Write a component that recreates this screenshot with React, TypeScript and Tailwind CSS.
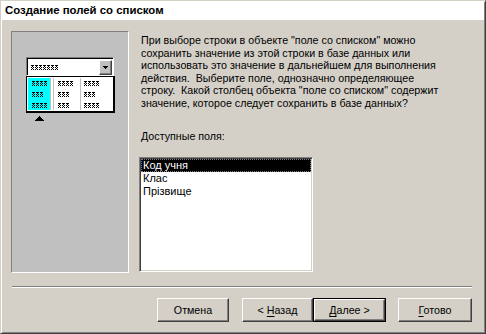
const raised = "border border-t-white border-l-white border-r-[#404040] border-b-[#404040] shadow-[inset_-1px_-1px_0_#808080]";

function Glyph({ n }: { n: number }) {
  const w = n * 4 - 1;
  const px: JSX.Element[] = [];
  for (let c = 0; c < n; c++) {
    for (let y = 0; y < 5; y++) {
      for (let x = 0; x < 3; x++) {
        if ((x + y) % 2 === 0 || y === 0) px.push(<rect key={`${c}-${x}-${y}`} x={c * 4 + x} y={y} width={1} height={1} fill="#000" />);
      }
    }
  }
  return (
    <svg width={w} height={5} viewBox={`0 0 ${w} 5`} className="block" shapeRendering="crispEdges">
      {px}
    </svg>
  );
}

function Column({ rows, className }: { rows: number[]; className: string }) {
  return (
    <div className={`flex flex-col gap-[6px] pt-[3px] ${className}`}>
      {rows.map((n, i) => (
        <Glyph key={i} n={n} />
      ))}
    </div>
  );
}

function ComboPicture() {
  return (
    <div className="w-[118px] h-[242px] bg-[#c0c0c0] border border-t-[#808080] border-l-[#808080] border-r-white border-b-white">
      <div className="ml-[14px] mt-[25px] w-[89px]">
        <div className="h-[19px] w-[88px] bg-white border border-t-[#808080] border-l-[#808080] border-r-white border-b-white shadow-[inset_1px_1px_0_#000] flex items-center">
          <div className="ml-[4px] mt-px">
            <Glyph n={7} />
          </div>
          <div className={`ml-auto mr-px mt-px w-[13px] h-[15px] bg-[#c0c0c0] flex items-center justify-center ${raised}`}>
            <svg width="5" height="3" viewBox="0 0 5 3" shapeRendering="crispEdges">
              <path d="M0 0h5l-2.5 3z" fill="#000" />
            </svg>
          </div>
        </div>
        <div className="h-[37px] w-[89px] bg-white border border-black border-r-2 border-b-2 flex p-px">
          <Column rows={[4, 3, 4]} className="w-[22px] h-full bg-[#00ffff] pl-[4px] shadow-[1px_0_0_#c0c0c0]" />
          <Column rows={[4, 3, 3]} className="ml-[3px] w-[27px] h-full border-l border-[#c0c0c0] pl-[4px]" />
          <Column rows={[4, 3, 4]} className="w-[30px] h-full border-l border-[#c0c0c0] pl-[3px]" />
        </div>
        <svg width="9" height="5" viewBox="0 0 9 5" className="ml-[9px] mt-[3px] block" shapeRendering="crispEdges">
          <path d="M4.5 0L9 5H0z" fill="#000" />
        </svg>
      </div>
    </div>
  );
}

function Button({ label, u, w, def }: { label: string; u?: [string, string, string]; w: string; def?: boolean }) {
  const inner = (
    <div className={`h-full w-full flex items-center justify-center ${raised}`}>
      {u ? (
        <span>
          {u[0]}
          <span className="underline underline-offset-2">{u[1]}</span>
          {u[2]}
        </span>
      ) : (
        label
      )}
    </div>
  );
  return <div className={`h-[24px] ${w} ${def ? "border border-black" : ""}`}>{inner}</div>;
}

export default function App() {
  const lines = [
    "При выборе строки в объекте \"поле со списком\" можно",
    "сохранить значение из этой строки в базе данных или",
    "использовать это значение в дальнейшем для выполнения",
    "действия.  Выберите поле, однозначно определяющее",
    "строку.  Какой столбец объекта \"поле со списком\" содержит",
    "значение, которое следует сохранить в базе данных?",
  ];
  return (
    <div className="w-[486px] h-[334px] bg-[#d4d0c8] border border-[#d4d0c8] border-r-[#404040] border-b-[#404040] shadow-[inset_1px_1px_0_#fff,inset_-1px_-1px_0_#808080] font-['Liberation_Sans',Arial,sans-serif] text-[10.7px] text-black">
      <div className="m-px flex flex-col">
        <div className="h-[18px] bg-white flex items-center pl-[3px] font-bold text-[11.4px]">Создание полей со списком</div>
        <div className="flex pl-[9px] pt-[11px]">
          <ComboPicture />
          <div className="ml-[12px] flex flex-col">
            <div className="mt-[3px] leading-[12.5px] whitespace-pre">
              {lines.map((l) => (
                <div key={l}>{l}</div>
              ))}
            </div>
            <div className="mt-[21px] leading-[12.5px]">Доступные поля:</div>
            <div className="mt-[14px] -ml-[2px] w-[174px] h-[115px] bg-white border border-t-[#808080] border-l-[#808080] border-r-white border-b-white shadow-[inset_1px_1px_0_#404040,inset_-1px_-1px_0_#d4d0c8] p-px leading-[13px] text-[11px]">
              <div className="h-[13px] bg-black text-white pl-[2px] outline outline-1 outline-dotted outline-[#808080] -outline-offset-1">Код учня</div>
              <div className="h-[13px] pl-[2px]">Клас</div>
              <div className="h-[13px] pl-[2px]">Прізвище</div>
            </div>
          </div>
        </div>
        <div className="ml-[10px] mt-[13px] w-[460px] border-t border-t-[#808080] border-b border-b-white" />
        <div className="mt-[10px] flex justify-end pr-[12px]">
          <Button label="Отмена" w="w-[72px]" />
          <div className="w-[13px]" />
          <Button label="< Назад" u={["< ", "Н", "азад"]} w="w-[71px]" />
          <Button label="Далее >" u={["", "Д", "алее >"]} w="w-[73px]" def />
          <div className="w-[12px]" />
          <Button label="Готово" u={["", "Г", "отово"]} w="w-[74px]" />
        </div>
      </div>
    </div>
  );
}
